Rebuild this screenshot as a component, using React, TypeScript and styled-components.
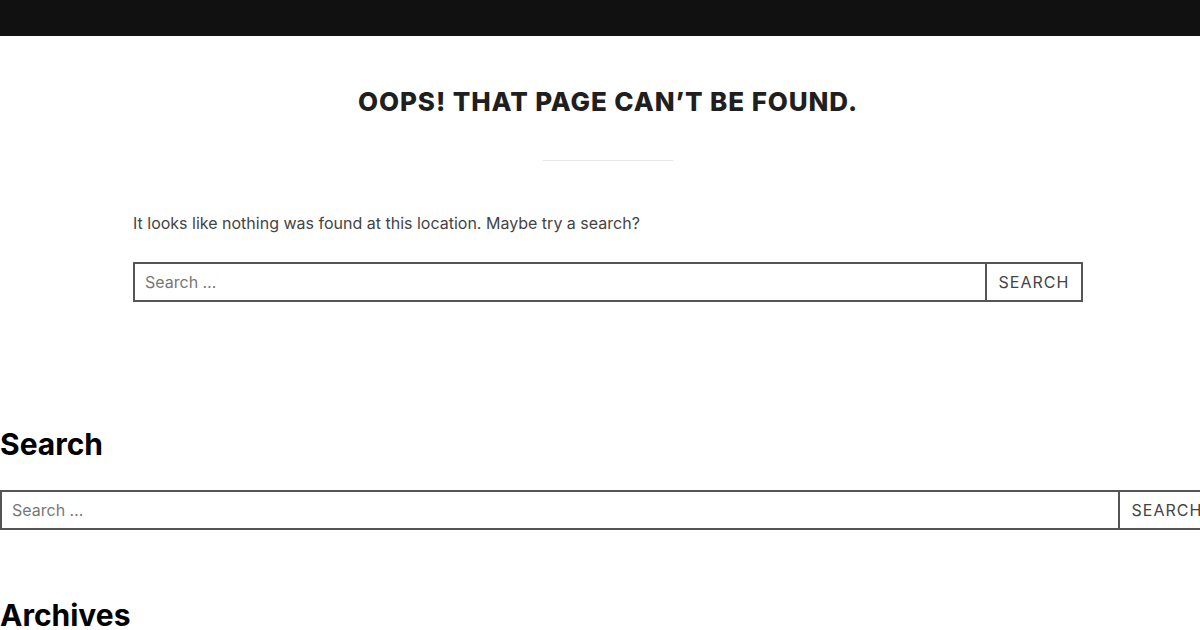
import React from "react";
import styled, { createGlobalStyle } from "styled-components";

const Global = createGlobalStyle`
  html, body { margin: 0; padding: 0; background: #fff; }
  body { font-family: Inter, "Noto Sans", sans-serif; overflow-x: hidden; }
  * { box-sizing: border-box; }
`;

const Page = styled.div`
  width: calc(100% + 16px);
`;

const TopBar = styled.header`
  height: 36px;
  background: #111111;
`;

const Main = styled.main`
  width: 950px;
  margin: 0 auto;
  padding: 0;
`;

const Title = styled.h1`
  margin: 0;
  padding-top: 50px;
  text-align: center;
  font-family: Inter, "Open Sans", sans-serif;
  font-weight: 800;
  font-size: 26px;
  line-height: 32px;
  letter-spacing: 0.9px;
  text-transform: uppercase;
  color: #1f1f1f;
`;

const Divider = styled.hr`
  width: 130px;
  height: 1px;
  border: 0;
  background: #e6e6e6;
  margin: 42px auto 0;
`;

const Text = styled.p`
  margin: 50px 0 0;
  font-size: 16px;
  line-height: 24px;
  color: #444;
`;

const Form = styled.form`
  display: flex;
  height: 40px;
  width: 100%;
`;

const Input = styled.input`
  flex: 1;
  min-width: 0;
  height: 40px;
  border: 2px solid #555;
  border-right: 0;
  padding: 0 10px;
  font-family: Inter, sans-serif;
  font-size: 16px;
  color: #444;
  outline: none;
  &::placeholder { color: #777; }
`;

const Button = styled.button`
  width: 98px;
  flex: 0 0 98px;
  height: 40px;
  border: 2px solid #555;
  background: #fff;
  font-family: Inter, sans-serif;
  font-size: 16px;
  letter-spacing: 1px;
  color: #444;
  text-transform: uppercase;
  padding: 0;
`;

const MainForm = styled.div`
  margin-top: 27px;
`;

const Sidebar = styled.aside`
  margin-top: 124px;
`;

const Widget = styled.section<{ $gap?: number }>`
  margin-top: ${(p) => p.$gap ?? 0}px;
`;

const WidgetTitle = styled.h2`
  margin: 0 0 28px;
  font-family: Inter, sans-serif;
  font-weight: 700;
  font-size: 30px;
  line-height: 36px;
  color: #000;
`;

function SearchForm() {
  return (
    <Form onSubmit={(e) => e.preventDefault()}>
      <Input type="search" placeholder="Search …" />
      <Button type="submit">Search</Button>
    </Form>
  );
}

export default function App() {
  return (
    <Page>
      <Global />
      <TopBar />
      <Main>
        <Title>Oops! That page can’t be found.</Title>
        <Divider />
        <Text>It looks like nothing was found at this location. Maybe try a search?</Text>
        <MainForm>
          <SearchForm />
        </MainForm>
      </Main>
      <Sidebar>
        <Widget>
          <WidgetTitle>Search</WidgetTitle>
          <SearchForm />
        </Widget>
        <Widget $gap={67}>
          <WidgetTitle>Archives</WidgetTitle>
        </Widget>
      </Sidebar>
    </Page>
  );
}
